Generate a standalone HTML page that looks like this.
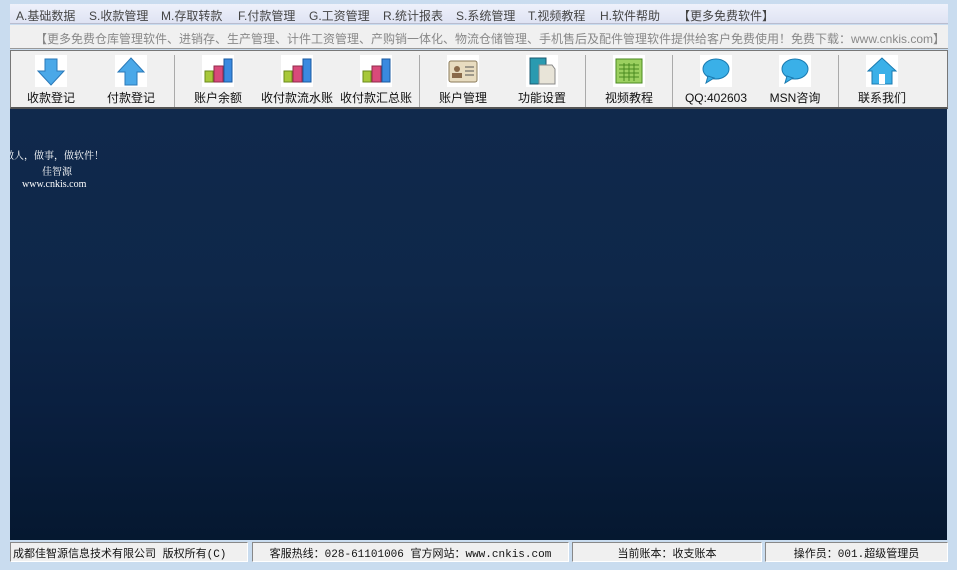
<!DOCTYPE html>
<html><head><meta charset="utf-8"><style>
*{margin:0;padding:0;box-sizing:border-box}
body{width:957px;height:570px;overflow:hidden;background:#c9dcef;font-family:"Liberation Sans","Noto Sans CJK SC",sans-serif;position:relative}
.a{position:absolute}
#menu{left:10px;top:4px;width:938px;height:20px;background:linear-gradient(#eef1fb,#dfe3f3);border-bottom:1px solid #b9bdd0;font-size:12px;color:#444}
#menu span{position:absolute;top:3px}
#ban{left:10px;top:25px;width:938px;height:24px;background:#f0f0f0;font-size:12px;color:#888;border-bottom:1px solid #999}
#tb{left:10px;top:50px;width:938px;height:59px;background:#f0f0f0;border:1px solid #777;border-bottom:2px solid #555}
.it{position:absolute;top:4px;width:80px;margin-left:-40px;text-align:center;font-size:12px;color:#111;line-height:14px}
.ic{width:32px;height:32px;background:#fff;margin:0 auto 4px;position:relative}
.sep{position:absolute;top:4px;width:1px;height:52px;background:#aaa}
#main{left:10px;top:109px;width:937px;height:431px;overflow:hidden;background:linear-gradient(#10294c 0%,#0e2749 40%,#0a1f3f 70%,#051830 100%)}
#main div{position:absolute;color:#fff;font-family:"Liberation Serif","Noto Serif CJK SC",serif;font-size:10px}
#st{left:10px;top:542px;width:938px;height:20px;font-size:12px;font-family:"Liberation Mono","Noto Sans CJK SC",monospace;color:#111}
.p{position:absolute;top:0;height:20px;border:1px solid #888;border-right-color:#fff;border-bottom-color:#fff;background:#f0f0f0;padding-top:2px;text-align:center;white-space:nowrap;font-size:11px}
</style></head><body>
<div id="menu" class="a">
<span style="left:6px">A.基础数据</span><span style="left:79px">S.收款管理</span><span style="left:151px">M.存取转款</span><span style="left:228px">F.付款管理</span><span style="left:299px">G.工资管理</span><span style="left:373px">R.统计报表</span><span style="left:446px">S.系统管理</span><span style="left:518px">T.视频教程</span><span style="left:590px">H.软件帮助</span><span style="left:668px">【更多免费软件】</span>
</div>
<div id="ban" class="a"><span class="a" style="left:25px;top:5px;letter-spacing:0px">【更多免费仓库管理软件、进销存、生产管理、计件工资管理、产购销一体化、物流仓储管理、手机售后及配件管理软件提供给客户免费使用！免费下载：www.cnkis.com】</span></div>
<div id="tb" class="a">
<div class="it" style="left:40px"><div class="ic"><svg width="32" height="32"><path d="M10 4h12v12h7L16 30 3 16h7z" fill="#4aa8e8" stroke="#2a78b8"/></svg></div>收款登记</div>
<div class="it" style="left:120px"><div class="ic"><svg width="32" height="32"><path d="M10 30h12V17h7L16 3 3 17h7z" fill="#4aa8e8" stroke="#2a78b8"/></svg></div>付款登记</div>
<div class="sep" style="left:163px"></div>
<div class="it" style="left:207px"><div class="ic"><svg width="32" height="32"><rect x="3" y="16" width="8" height="11" fill="#a8c83a" stroke="#6a8a1a"/><rect x="12" y="11" width="9" height="16" fill="#d84a7a" stroke="#902a4a"/><rect x="22" y="4" width="8" height="23" fill="#3a8ae0" stroke="#1a5aa0"/></svg></div>账户余额</div>
<div class="it" style="left:286px"><div class="ic"><svg width="32" height="32"><rect x="3" y="16" width="8" height="11" fill="#a8c83a" stroke="#6a8a1a"/><rect x="12" y="11" width="9" height="16" fill="#d84a7a" stroke="#902a4a"/><rect x="22" y="4" width="8" height="23" fill="#3a8ae0" stroke="#1a5aa0"/></svg></div>收付款流水账</div>
<div class="it" style="left:365px"><div class="ic"><svg width="32" height="32"><rect x="3" y="16" width="8" height="11" fill="#a8c83a" stroke="#6a8a1a"/><rect x="12" y="11" width="9" height="16" fill="#d84a7a" stroke="#902a4a"/><rect x="22" y="4" width="8" height="23" fill="#3a8ae0" stroke="#1a5aa0"/></svg></div>收付款汇总账</div>
<div class="sep" style="left:408px"></div>
<div class="it" style="left:452px"><div class="ic"><svg width="32" height="32"><rect x="2" y="6" width="28" height="21" rx="2" fill="#e8dcc0" stroke="#8a7a5a"/><circle cx="10" cy="14" r="3" fill="#8a6a4a"/><rect x="5" y="18" width="10" height="5" fill="#8a6a4a"/><path d="M18 12h9M18 16h9M18 20h9" stroke="#555"/></svg></div>账户管理</div>
<div class="it" style="left:531px"><div class="ic"><svg width="32" height="32"><rect x="4" y="3" width="16" height="26" fill="#2a9ab0" stroke="#1a5a70"/><path d="M13 10h13l3 4v15H13z" fill="#e8e4d8" stroke="#888"/></svg></div>功能设置</div>
<div class="sep" style="left:574px"></div>
<div class="it" style="left:618px"><div class="ic"><svg width="32" height="32"><rect x="3" y="4" width="26" height="24" fill="#9cd060" stroke="#4a8a20"/><path d="M6 10h20M6 14h20M6 18h20M6 22h20M11 8v18M16 8v18M21 8v18" stroke="#4a8a20"/></svg></div>视频教程</div>
<div class="sep" style="left:661px"></div>
<div class="it" style="left:705px"><div class="ic"><svg width="32" height="32"><ellipse cx="16" cy="14" rx="13" ry="10" fill="#3ab0e8" stroke="#1a7ab0"/><path d="M8 21l-2 7 8-5z" fill="#3ab0e8" stroke="#1a7ab0"/></svg></div>QQ:402603</div>
<div class="it" style="left:784px"><div class="ic"><svg width="32" height="32"><ellipse cx="16" cy="14" rx="13" ry="10" fill="#3ab0e8" stroke="#1a7ab0"/><path d="M8 21l-2 7 8-5z" fill="#3ab0e8" stroke="#1a7ab0"/></svg></div>MSN咨询</div>
<div class="sep" style="left:827px"></div>
<div class="it" style="left:871px"><div class="ic"><svg width="32" height="32"><path d="M16 3L2 16h4v13h20V16h4z" fill="#3ab0e8" stroke="#1a7ab0"/><rect x="13" y="19" width="6" height="10" fill="#fff"/></svg></div>联系我们</div>
</div>
<div id="main" class="a">
<div style="left:-6px;top:38px">做人，做事，做软件！</div>
<div style="left:32px;top:54px">佳智源</div>
<div style="left:12px;top:70px">www.cnkis.com</div>
</div>
<div id="st" class="a">
<div class="p" style="left:0;width:238px;text-align:left;padding-left:2px">成都佳智源信息技术有限公司 版权所有(C)</div>
<div class="p" style="left:242px;width:317px">客服热线：028-61101006 官方网站：www.cnkis.com</div>
<div class="p" style="left:562px;width:190px">当前账本：收支账本</div>
<div class="p" style="left:755px;width:183px">操作员：001.超级管理员</div>
</div>
</body></html>
